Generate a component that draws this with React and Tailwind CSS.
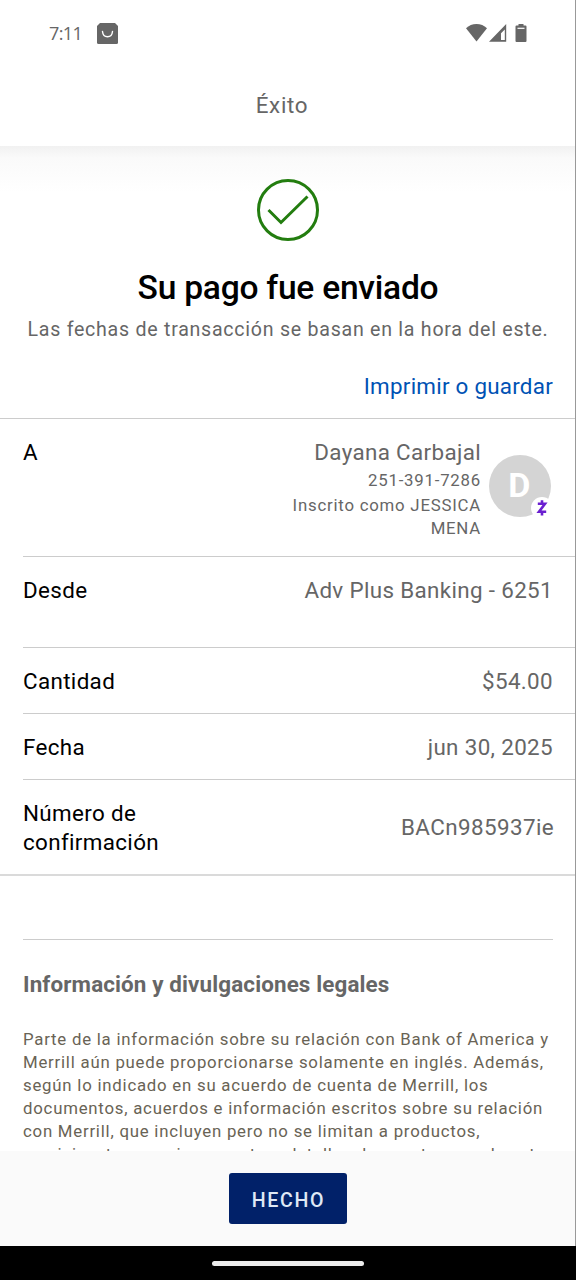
import { clsx } from "clsx";

const details = [
  { label: "Desde", value: "Adv Plus Banking - 6251", height: "h-[91px]" },
  { label: "Cantidad", value: "$54.00", height: "h-[66px]" },
  { label: "Fecha", value: "jun 30, 2025", height: "h-[66px]" },
];

const legalLines = [
  "Parte de la información sobre su relación con Bank of America y",
  "Merrill aún puede proporcionarse solamente en inglés. Además,",
  "según lo indicado en su acuerdo de cuenta de Merrill, los",
  "documentos, acuerdos e información escritos sobre su relación",
  "con Merrill, que incluyen pero no se limitan a productos,",
  "servicios, transacciones y otros detalles de cuentas, puede est",
];

function StatusBar() {
  return (
    <div className="flex h-[66px] items-center justify-between pl-[49px] pr-[48px] text-[#666]">
      <div className="flex items-center">
        <span className="w-[48px] font-['Open_Sans'] text-[18px] font-medium leading-6 tracking-[-0.600px]">7:11</span>
        <svg width="21" height="21" viewBox="0 0 21 21">
          <path d="M3 0h15l3 3v16.500a1.500 1.500 0 0 1-1.500 1.500h-18A1.500 1.500 0 0 1 0 19.500V3z" fill="currentColor" />
          <path d="M5.500 8.500c.3 3.400 2.300 5.200 5 5.200s4.700-1.800 5-5.200" fill="none" stroke="#fff" strokeWidth="1.400" strokeLinecap="round" />
        </svg>
      </div>
      <div className="flex items-center">
        <svg width="21" height="18" viewBox="0 0 21 18">
          <path d="M0 4.200C2.800 1.500 6.500 0 10.500 0S18.200 1.500 21 4.200L10.500 17.500z" fill="currentColor" />
        </svg>
        <svg className="ml-[2px]" width="18" height="18" viewBox="0 0 18 18">
          <path d="M17.200 0v17.800H0zM15.800 5.500L12 9.300v6.700h3.800z" fill="currentColor" fillRule="evenodd" />
        </svg>
        <svg className="ml-[8px] mr-px" width="12" height="18" viewBox="0 0 12 18">
          <path d="M3.500 0h5v1.500H10.500a1 1 0 0 1 1 1V17a1 1 0 0 1-1 1h-9a1 1 0 0 1-1-1V2.500a1 1 0 0 1 1-1h2z" fill="currentColor" />
          <path d="M2.500 4.300h7" stroke="#fff" strokeWidth="1.200" />
        </svg>
      </div>
    </div>
  );
}

function Avatar() {
  return (
    <div className="relative size-[62px] rounded-full bg-[#d4d4d4]">
      <span className="flex h-full items-center justify-center pb-[2px] pr-px text-[34px] font-bold text-white">
        D
      </span>
      <div className="absolute left-[42px] top-[42px] flex size-[22px] items-center justify-center rounded-full bg-white">
        <svg width="12" height="18" viewBox="0 0 12 18">
          <path d="M1.800 4.700h7.200L3 12.800h7.200M6 1.300v3.400M6 12.800v3.700" fill="none" stroke="#6a1fd0" strokeWidth="2.600" />
        </svg>
      </div>
    </div>
  );
}

export default function App() {
  return (
    <div className="relative flex h-[1280px] w-[576px] flex-col overflow-hidden bg-white font-[Roboto,sans-serif] text-black">
      {/* Header */}
      <header className="h-[146px]">
        <StatusBar />
        <h1 className="pr-[12px] pt-[24px] text-center text-[22.400px] leading-[30px] tracking-[0.700px] text-[#666]">
          Éxito
        </h1>
      </header>

      <main className="h-[1005px] overflow-hidden">
        {/* Confirmation message */}
        <section className="flex h-[272px] flex-col items-center bg-[linear-gradient(#f1f1f1,#fafafa_12px,#fff_46px)] pt-[33px]">
          <svg width="62" height="62" viewBox="0 0 62 62" fill="none" stroke="#237d0f" strokeWidth="3">
            <circle cx="31" cy="31" r="29.500" />
            <path d="M11.500 31l12.500 12.500L50.500 17.500" />
          </svg>
          <h2 className="mt-[27px] text-[33.600px] font-medium leading-[40px] tracking-[-0.250px]">Su pago fue enviado</h2>
          <p className="mt-[10px] text-[19.600px] leading-6 tracking-[0.740px] text-[#666]">
            Las fechas de transacción se basan en la hora del este.
          </p>
          <a className="mr-[23px] mt-[29px] self-end text-[22.400px] leading-[30px] tracking-[0.250px] text-[#0052b4]">
            Imprimir o guardar
          </a>
        </section>

        {/* Payment details */}
        <section className="border-b-2 border-t border-b-[#dadada] border-t-[#ccc] text-[22.400px] leading-[29px] tracking-[0.350px]">
          <div className="ml-[23px] flex h-[138px] border-b border-[#ccc] pr-[25px] pt-[19px]">
            <span>A</span>
            <div className="ml-auto mr-[8px] text-right text-[16.800px] leading-[23px] tracking-[0.780px] text-[#666]">
              <p className="text-[22.400px] leading-[29px] tracking-[0.350px]">Dayana Carbajal</p>
              <p className="mt-[2px]">251-391-7286</p>
              <p className="mt-[2px]">Inscrito como JESSICA</p>
              <p>MENA</p>
            </div>
            <div className="pt-[17px]">
              <Avatar />
            </div>
          </div>
          {details.map((row) => (
            <div
              key={row.label}
              className={clsx("ml-[23px] flex justify-between border-b border-[#ccc] pr-[23px] pt-[19px]", row.height)}
            >
              <span>{row.label}</span>
              <span className="text-[#666]">{row.value}</span>
            </div>
          ))}
          <div className="ml-[23px] flex h-[94px] items-center justify-between pr-[22px]">
            <span className="w-[160px] pt-px">Número de confirmación</span>
            <span className="pt-px tracking-[0.400px] text-[#666]">BACn985937ie</span>
          </div>
        </section>

        {/* Legal */}
        <section className="mx-[23px] mt-[63px] border-t border-[#ccc] pt-[31px] text-[#666]">
          <h3 className="text-[22.400px] font-bold leading-[26px] tracking-[0.130px]">Información y divulgaciones legales</h3>
          <div className="mt-[31px] whitespace-nowrap text-[16.800px] leading-[23px] tracking-[0.770px] text-[#696355]">
            {legalLines.map((line) => (
              <p key={line}>{line}</p>
            ))}
          </div>
        </section>
      </main>

      <footer className="flex h-[95px] items-center justify-center bg-[#fafafa]">
        <button className="h-[51px] w-[118px] rounded-[3px] bg-[#012169] pl-px pt-[4px] text-[19.600px] font-medium tracking-[1.700px] text-[#dfe8f5]">
          HECHO
        </button>
      </footer>
      <div className="flex h-[34px] items-center justify-center bg-black">
        <div className="h-[5px] w-[152px] rounded-full bg-[#ececec]" />
      </div>

      {/* Screen edge */}
      <div className="absolute right-0 top-0 h-[1246px] w-px bg-[#999]" />
    </div>
  );
}
